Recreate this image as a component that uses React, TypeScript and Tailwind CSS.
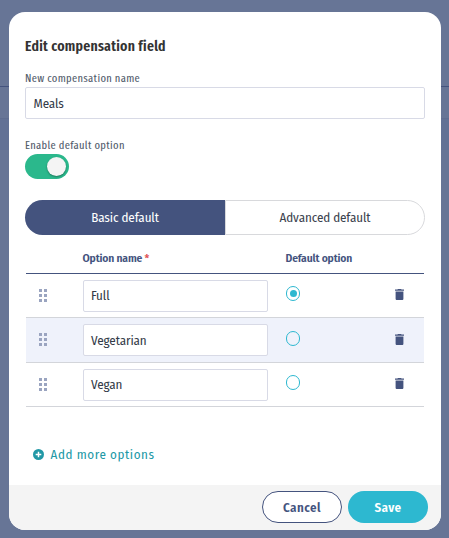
import { useState } from "react"

const options = [
  { id: "full", name: "Full" },
  { id: "vegetarian", name: "Vegetarian" },
  { id: "vegan", name: "Vegan" },
]

function DragHandle() {
  return (
    <svg width="8" height="14" viewBox="0 0 8 14" fill="#9aa4c0" shapeRendering="crispEdges">
      {[0, 5, 10].map((y) => (
        <g key={y}>
          <rect x="0" y={y} width="3" height="3" />
          <rect x="5" y={y} width="3" height="3" />
        </g>
      ))}
    </svg>
  )
}

function TrashIcon() {
  return (
    <svg width="9" height="11" viewBox="0 0 9 11" fill="#44537e">
      <path d="M0 .6h2.4L3 0h3l.6.6H9v1.1H0z" />
      <path d="M.6 2.5h7.8v7.2c0 .8-.5 1.3-1.3 1.3H1.9C1.1 11 .6 10.5.6 9.7z" />
    </svg>
  )
}

function PlusIcon() {
  return (
    <svg className="mb-px" width="11" height="11" viewBox="0 0 11 11">
      <circle cx="5.5" cy="5.5" r="5.5" fill="#2198a6" />
      <path d="M5.5 2.7v5.6M2.7 5.5h5.6" stroke="#fff" strokeWidth="1.5" />
    </svg>
  )
}

export default function App() {
  const [selected, setSelected] = useState("full")
  const [enabled, setEnabled] = useState(true)

  return (
    <div className="h-[538px] w-[449px] overflow-hidden bg-[#677596] font-['Fira_Sans_Condensed','Open_Sans',sans-serif] font-stretch-[75%]">
      {/* Page behind the dialog */}
      <div className="h-[86px]" />
      <div className="h-px bg-[#44537e]" />
      <div className="h-[31px]" />
      <div className="h-8 border-t border-[#5f6d90] bg-[#627195]" />

      {/* Dialog */}
      <div className="absolute left-[9px] top-3 flex h-[518px] w-[432px] flex-col overflow-hidden rounded-2xl bg-white">
        <div className="flex flex-1 flex-col px-4 pt-6">
          <h1 className="h-5 whitespace-nowrap font-['Fira_Sans_Extra_Condensed','Open_Sans',sans-serif] text-[15px] leading-5 font-semibold tracking-[0.25px] text-[#333]">
            Edit compensation field
          </h1>

          <label className="mt-3.5 h-[17px] whitespace-nowrap font-['Fira_Sans_Extra_Condensed','Open_Sans',sans-serif] text-[11.5px] leading-[17px] tracking-[0.3px] text-[#525c6b]">
            New compensation name
          </label>
          <div className="flex h-8 items-center rounded-xs border border-[#d8dae6] px-[7.5px] pt-px text-[13px] tracking-[-0.1px] text-[#333b48]">
            Meals
          </div>

          <label className="mt-[18px] h-[17px] whitespace-nowrap font-['Fira_Sans_Extra_Condensed','Open_Sans',sans-serif] text-[11.5px] leading-[17px] tracking-[0.3px] text-[#525c6b]">
            Enable default option
          </label>
          <button
            onClick={() => setEnabled(!enabled)}
            className={`flex h-[25px] w-11 items-center rounded-full px-[3px] ${enabled ? "justify-end bg-[#2bb88c]" : "bg-gray-300"}`}
          >
            <span className="size-[19px] rounded-full bg-[#f4f4f4] shadow-[0_1px_2px_rgba(0,0,0,0.35)]" />
          </button>

          <div className="mt-[21px] flex h-[35px] text-[13px] tracking-[-0.08px]">
            <button className="w-[200px] rounded-l-full bg-[#44537e] text-white">Basic default</button>
            <button className="w-[200px] rounded-r-full border border-[#d8d9dc] text-[#3b424d]">
              Advanced default
            </button>
          </div>

          <div className="mx-px mt-[11px]">
            <div className="flex h-7 items-center border-b border-[#44537e] pb-0.5 text-[11.5px] font-semibold tracking-[-0.15px] whitespace-nowrap text-[#44537e]">
              <div className="ml-[56.5px] w-[203px]">
                Option name <span className="text-[#e05353]">*</span>
              </div>
              <div>Default option</div>
            </div>
            {options.map((option, i) => (
              <div
                key={option.id}
                className={`flex items-center border-b border-[#d3d5da] ${i === 1 ? "h-[45px] bg-[#eff2fb]" : "h-11"}`}
              >
                <div className="w-[57px] pl-[13px]">
                  <DragHandle />
                </div>
                <div
                  className={`flex h-8 w-[185px] items-center rounded-xs border border-[#d8dae6] bg-white px-[7px] text-[13px] tracking-[-0.1px] text-[#333b48] ${i === 1 ? "pt-px" : ""}`}
                >
                  {option.name}
                </div>
                <button
                  onClick={() => setSelected(option.id)}
                  className="mb-1 ml-[18px] flex h-[15px] w-[14px] items-center justify-center rounded-full border border-[#2db8d0]"
                >
                  {selected === option.id && <span className="size-[7px] rounded-full bg-[#2db8d0]" />}
                </button>
                <button className="mb-0.5 ml-[95px]">
                  <TrashIcon />
                </button>
              </div>
            ))}
          </div>

          <button className="mt-9 ml-2 flex h-6 items-center gap-[6.5px] whitespace-nowrap text-[13px] tracking-[0.58px] text-[#2198a6]">
            <PlusIcon />
            Add more options
          </button>
        </div>

        <div className="flex h-[45px] justify-end gap-1.5 bg-[#f4f4f4] pt-1.5 pr-[13px] text-[13px] font-semibold tracking-[0.45px]">
          <button className="h-8 w-20 rounded-full border border-[#44537e] bg-white pt-px text-[#44537e]">
            Cancel
          </button>
          <button className="h-8 w-20 rounded-full bg-[#2db8d0] pt-px text-white">Save</button>
        </div>
      </div>
    </div>
  )
}
